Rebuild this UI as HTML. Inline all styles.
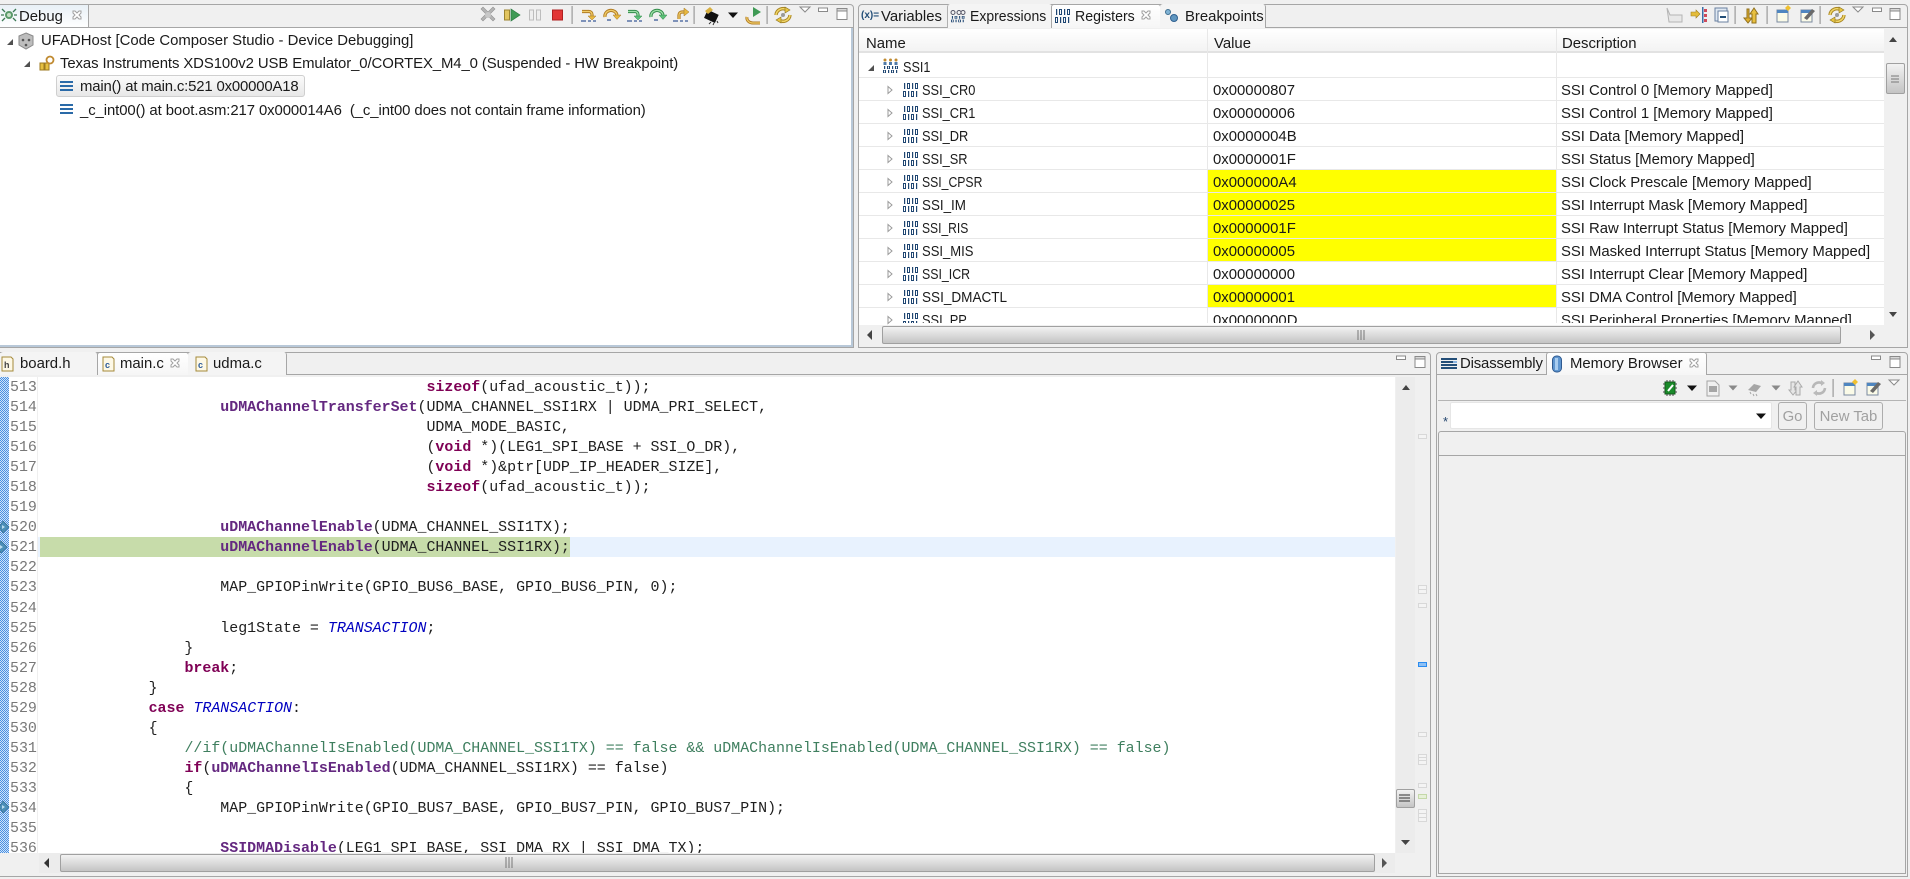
<!DOCTYPE html>
<html><head><meta charset="utf-8"><title>Code Composer Studio</title>
<style>
html,body{margin:0;padding:0;width:1910px;height:879px;overflow:hidden;background:#f0f0f0}
body{position:relative;font-family:"Liberation Sans",sans-serif;font-size:14.9px;color:#1a1a1a}
div{position:absolute;box-sizing:border-box}
.t{white-space:pre;line-height:18px;height:18px}
.n{transform-origin:0 0}
.d{letter-spacing:-.03px}
.b{border:1px solid #a6a6a6}
.tab{height:24px;border:1px solid #a6a6a6;border-bottom:none;border-radius:3px 3px 0 0;background:#f4f4f4}
.act{background:linear-gradient(#fff,#f6f6f6)}
.thumb{background:linear-gradient(#f2f2f2,#c4c4c4);border:1px solid #a0a0a0;border-radius:2px}
pre{position:absolute;margin:0;font-family:"Liberation Mono",monospace;font-size:14.95px;line-height:20.05px;color:#1e1e1e}
pre b{font-weight:bold}
.f{color:#642880;font-weight:bold}.k{color:#7f0055;font-weight:bold}.c{color:#3f7f5f}.e{color:#0000c0;font-style:italic}
svg{position:absolute;left:0;top:0}
</style></head><body>

<!-- Debug panel -->
<div class="b" style="left:0;top:4px;width:854px;height:344px;border-radius:0 4px 0 0;border-left:none;background:#f0f0f0"></div>
<div style="left:0;top:4px;width:89px;height:24px;background:linear-gradient(#e8f0f6,#fff);border-right:1px solid #a6a6a6;border-top:1px solid #a6a6a6"></div>
<div style="left:0;top:27px;width:853px;height:1px;background:#a6a6a6"></div>
<div style="left:89px;top:27px;width:764px;height:1px;background:#a6a6a6"></div>
<div style="left:0;top:28px;width:851px;height:317px;background:#fff"></div>
<div style="left:851px;top:28px;width:2px;height:319px;background:#b8c8d8"></div>
<div style="left:0;top:345px;width:853px;height:2px;background:#b8c8d8"></div>
<div class="t" style="left:19px;top:8px">Debug</div>
<div class="t" style="left:41px;top:32px">UFADHost [Code Composer Studio - Device Debugging]</div>
<div class="t" style="left:60px;top:55px;letter-spacing:-.09px">Texas Instruments XDS100v2 USB Emulator_0/CORTEX_M4_0 (Suspended - HW Breakpoint)</div>
<div style="left:56px;top:75px;width:249px;height:22px;background:linear-gradient(#fbfbfb,#e8e8e8);border:1px solid #cfcfcf;border-radius:3px"></div>
<div class="t" style="left:80px;top:78px;letter-spacing:-.16px">main() at main.c:521 0x00000A18</div>
<div class="t" style="left:80px;top:102px;letter-spacing:-.085px">_c_int00() at boot.asm:217 0x000014A6  (_c_int00 does not contain frame information)</div>

<!-- Registers panel -->
<div class="b" style="left:858px;top:4px;width:1050px;height:344px;border-radius:4px 4px 0 0;background:#f0f0f0"></div>
<div style="left:859px;top:27px;width:1048px;height:1px;background:#a6a6a6"></div>
<div class="tab" style="left:947px;top:4px;width:105px;border-left:1px solid #b0b0b0;border-top:none;border-right:none"></div>
<div class="tab act" style="left:1051px;top:4px;width:110px;height:24px"></div>
<div class="tab" style="left:1160px;top:4px;width:106px;border-left:none;border-top:none"></div>
<div class="t" style="left:881px;top:8px">Variables</div>
<div class="t n" style="left:970px;top:8px;transform:scaleX(.94)">Expressions</div>
<div class="t n" style="left:1075px;top:8px;transform:scaleX(.95)">Registers</div>
<div class="t" style="left:1185px;top:8px">Breakpoints</div>

<div style="left:859px;top:29px;width:1025px;height:296px;background:#fff"></div>
<div style="left:859px;top:29px;width:1025px;height:24px;background:linear-gradient(#fff,#f3f3f3);border-bottom:2px solid #e2e2e2"></div>
<div class="t" style="left:866px;top:35px">Name</div>
<div class="t" style="left:1214px;top:35px">Value</div>
<div class="t" style="left:1562px;top:35px">Description</div>

<div style="left:0;top:0;width:1910px;height:323px;overflow:hidden">
<div style="left:1208px;top:170px;width:348px;height:22px;background:#ff0"></div>
<div style="left:1208px;top:193px;width:348px;height:22px;background:#ff0"></div>
<div style="left:1208px;top:216px;width:348px;height:22px;background:#ff0"></div>
<div style="left:1208px;top:239px;width:348px;height:22px;background:#ff0"></div>
<div style="left:1208px;top:285px;width:348px;height:22px;background:#ff0"></div>
<div style="left:859px;top:77px;width:1025px;height:1px;background:#e8e8e8"></div>
<div style="left:859px;top:100px;width:1025px;height:1px;background:#e8e8e8"></div>
<div style="left:859px;top:123px;width:1025px;height:1px;background:#e8e8e8"></div>
<div style="left:859px;top:146px;width:1025px;height:1px;background:#e8e8e8"></div>
<div style="left:859px;top:169px;width:1025px;height:1px;background:#e8e8e8"></div>
<div style="left:859px;top:192px;width:1025px;height:1px;background:#e8e8e8"></div>
<div style="left:859px;top:215px;width:1025px;height:1px;background:#e8e8e8"></div>
<div style="left:859px;top:238px;width:1025px;height:1px;background:#e8e8e8"></div>
<div style="left:859px;top:261px;width:1025px;height:1px;background:#e8e8e8"></div>
<div style="left:859px;top:284px;width:1025px;height:1px;background:#e8e8e8"></div>
<div style="left:859px;top:307px;width:1025px;height:1px;background:#e8e8e8"></div>
<div style="left:1207px;top:29px;width:1px;height:296px;background:#e8e8e8"></div>
<div style="left:1556px;top:29px;width:1px;height:296px;background:#e8e8e8"></div>

<div class="t n" style="left:903px;top:59px;transform:scaleX(.85)">SSI1</div>
<div class="t n" style="left:922px;top:82px;transform:scaleX(.86)">SSI_CR0</div><div class="t" style="left:1213px;top:82px">0x00000807</div><div class="t d" style="left:1561px;top:82px">SSI Control 0 [Memory Mapped]</div>
<div class="t n" style="left:922px;top:105px;transform:scaleX(.86)">SSI_CR1</div><div class="t" style="left:1213px;top:105px">0x00000006</div><div class="t d" style="left:1561px;top:105px">SSI Control 1 [Memory Mapped]</div>
<div class="t n" style="left:922px;top:128px;transform:scaleX(.86)">SSI_DR</div><div class="t" style="left:1213px;top:128px">0x0000004B</div><div class="t d" style="left:1561px;top:128px">SSI Data [Memory Mapped]</div>
<div class="t n" style="left:922px;top:151px;transform:scaleX(.86)">SSI_SR</div><div class="t" style="left:1213px;top:151px">0x0000001F</div><div class="t d" style="left:1561px;top:151px">SSI Status [Memory Mapped]</div>
<div class="t n" style="left:922px;top:174px;transform:scaleX(.82)">SSI_CPSR</div><div class="t" style="left:1213px;top:174px">0x000000A4</div><div class="t d" style="left:1561px;top:174px">SSI Clock Prescale [Memory Mapped]</div>
<div class="t n" style="left:922px;top:197px;transform:scaleX(.9)">SSI_IM</div><div class="t" style="left:1213px;top:197px">0x00000025</div><div class="t d" style="left:1561px;top:197px">SSI Interrupt Mask [Memory Mapped]</div>
<div class="t n" style="left:922px;top:220px;transform:scaleX(.81)">SSI_RIS</div><div class="t" style="left:1213px;top:220px">0x0000001F</div><div class="t d" style="left:1561px;top:220px">SSI Raw Interrupt Status [Memory Mapped]</div>
<div class="t n" style="left:922px;top:243px;transform:scaleX(.875)">SSI_MIS</div><div class="t" style="left:1213px;top:243px">0x00000005</div><div class="t d" style="left:1561px;top:243px">SSI Masked Interrupt Status [Memory Mapped]</div>
<div class="t n" style="left:922px;top:266px;transform:scaleX(.83)">SSI_ICR</div><div class="t" style="left:1213px;top:266px">0x00000000</div><div class="t d" style="left:1561px;top:266px">SSI Interrupt Clear [Memory Mapped]</div>
<div class="t n" style="left:922px;top:289px;transform:scaleX(.91)">SSI_DMACTL</div><div class="t" style="left:1213px;top:289px">0x00000001</div><div class="t d" style="left:1561px;top:289px">SSI DMA Control [Memory Mapped]</div>
<div class="t n" style="left:922px;top:312px;transform:scaleX(.86)">SSI_PP</div><div class="t" style="left:1213px;top:312px">0x0000000D</div><div class="t d" style="left:1561px;top:312px">SSI Peripheral Properties [Memory Mapped]</div>
</div>

<div style="left:882px;top:326px;width:959px;height:18px" class="thumb"></div>
<div style="left:1886px;top:63px;width:19px;height:31px" class="thumb"></div>

<!-- Editor panel -->
<div class="b" style="left:0;top:352px;width:1431px;height:525px;border-left:none;border-radius:0 4px 0 0;background:#f0f0f0"></div>
<div style="left:0;top:374px;width:1430px;height:1px;background:#a6a6a6"></div>
<div class="tab" style="left:0;top:352px;width:98px;height:23px;border-left:none;border-top:none"></div>
<div class="tab act" style="left:97px;top:352px;width:92px;height:23px"></div>
<div class="tab" style="left:188px;top:352px;width:99px;height:23px;border-left:none;border-top:none"></div>
<div class="t" style="left:20px;top:355px">board.h</div>
<div class="t" style="left:120px;top:355px">main.c</div>
<div class="t" style="left:213px;top:355px">udma.c</div>

<div style="left:0;top:377px;width:1395px;height:476px;background:#fff"></div>
<div style="left:0;top:377px;width:9px;height:476px;background:repeating-conic-gradient(#4a90e2 0 25%,#cfe3f9 0 50%) 0 0/2px 2px"></div>
<div style="left:37px;top:377px;width:1px;height:476px;background:#efefef"></div>
<div style="left:38px;top:537px;width:1357px;height:20px;background:#e8f2fe"></div>
<div style="left:40px;top:537px;width:530px;height:20px;background:#c7dcaa"></div>

<div style="left:0;top:0;width:1395px;height:853px;overflow:hidden">
<pre style="left:10px;top:378px;color:#787878">513
514
515
516
517
518
519
520
521
522
523
524
525
526
527
528
529
530
531
532
533
534
535
536</pre>
<pre style="left:41px;top:378px">                                           <span class="k">sizeof</span>(ufad_acoustic_t));
                    <span class="f">uDMAChannelTransferSet</span>(UDMA_CHANNEL_SSI1RX | UDMA_PRI_SELECT,
                                           UDMA_MODE_BASIC,
                                           (<span class="k">void</span> *)(LEG1_SPI_BASE + SSI_O_DR),
                                           (<span class="k">void</span> *)&amp;ptr[UDP_IP_HEADER_SIZE],
                                           <span class="k">sizeof</span>(ufad_acoustic_t));

                    <span class="f">uDMAChannelEnable</span>(UDMA_CHANNEL_SSI1TX);
                    <span class="f">uDMAChannelEnable</span>(UDMA_CHANNEL_SSI1RX);

                    MAP_GPIOPinWrite(GPIO_BUS6_BASE, GPIO_BUS6_PIN, 0);

                    leg1State = <span class="e">TRANSACTION</span>;
                }
                <span class="k">break</span>;
            }
            <span class="k">case</span> <span class="e">TRANSACTION</span>:
            {
                <span class="c">//if(uDMAChannelIsEnabled(UDMA_CHANNEL_SSI1TX) == false &amp;&amp; uDMAChannelIsEnabled(UDMA_CHANNEL_SSI1RX) == false)</span>
                <span class="k">if</span>(<span class="f">uDMAChannelIsEnabled</span>(UDMA_CHANNEL_SSI1RX) == false)
                {
                    MAP_GPIOPinWrite(GPIO_BUS7_BASE, GPIO_BUS7_PIN, GPIO_BUS7_PIN);

                    <span class="f">SSIDMADisable</span>(LEG1_SPI_BASE, SSI_DMA_RX | SSI_DMA_TX);</pre>
</div>

<div style="left:39px;top:853px;width:1356px;height:20px;background:#ececec"></div>
<div style="left:60px;top:854px;width:1315px;height:18px" class="thumb"></div>
<div style="left:1396px;top:377px;width:19px;height:476px;background:#ececec"></div>
<div style="left:1396px;top:789px;width:19px;height:19px" class="thumb"></div>

<!-- Memory Browser panel -->
<div class="b" style="left:1436px;top:352px;width:472px;height:525px;border-radius:4px 4px 0 0;background:#f0f0f0"></div>
<div style="left:1437px;top:374px;width:109px;height:1px;background:#a6a6a6"></div>
<div style="left:1706px;top:374px;width:201px;height:1px;background:#a6a6a6"></div>
<div class="tab act" style="left:1546px;top:352px;width:161px;height:23px"></div>
<div class="t" style="left:1460px;top:355px;letter-spacing:-.15px">Disassembly</div>
<div class="t" style="left:1570px;top:355px">Memory Browser</div>
<div style="left:1438px;top:400px;width:468px;height:1px;background:#b4b4b4"></div>
<div class="t" style="left:1443px;top:413px;color:#24466e;font-size:13px">*</div>
<div style="left:1450px;top:402px;width:322px;height:27px;background:#fff;border-radius:2px;border:1px solid #e6e6e6"></div>
<div style="left:1778px;top:402px;width:29px;height:28px;border:1px solid #adadad;border-radius:3px;background:#f0f0f0;text-align:center;line-height:28px;color:#a0a0a0">Go</div>
<div style="left:1814px;top:402px;width:69px;height:28px;border:1px solid #adadad;border-radius:3px;background:#f0f0f0;text-align:center;line-height:28px;color:#a0a0a0">New Tab</div>
<div style="left:1438px;top:431px;width:468px;height:443px;border:1px solid #a6a6a6;border-radius:3px 3px 0 0;background:#f0f0f0"></div>
<div style="left:1439px;top:455px;width:466px;height:1px;background:#a6a6a6"></div>

<!-- Icons -->
<svg width="1910" height="879" viewBox="0 0 1910 879">
<defs>
<clipPath id="ppclip"><rect x="900" y="310" width="24" height="13"/></clipPath>
<g id="reg" fill="#1f4672" fill-rule="evenodd">
<path d="M1 0h1.200v6h-1.200zM4 0h3v6h-3zM5 1v4h1v-4zM9 0h1.200v6h-1.200zM12 0h3v6h-3zM13 1v4h1v-4z"/>
<path d="M0 8h3v6h-3zM1 9v4h1v-4zM5 8h1.200v6h-1.200zM8 8h3v6h-3zM9 9v4h1v-4zM13 8h1.200v6h-1.200z"/>
</g>
<g id="open"><path d="M0 3.5l4 3.5-4 3.5z" transform="translate(-2 -7)" fill="#fff" stroke="#9a9a9a"/></g>
<g id="close"><path d="M-4-4l2 0 2 2 2-2 2 0 0 2-2 2 2 2 0 2-2 0-2-2-2 2-2 0 0-2 2-2-2-2z" fill="#fff" stroke="#a0a0a0"/></g>
<g id="min"><rect x="-4.5" y="-2" width="9" height="3.5" fill="#fff" stroke="#8a8a8a"/></g>
<g id="max"><rect x="-5" y="-4.5" width="10" height="11" fill="#fff" stroke="#8a8a8a"/><rect x="-5" y="-4.5" width="10" height="2.5" fill="#d8d8d8" stroke="#8a8a8a"/></g>
<g id="vtri"><path d="M-5-3h10l-5 5z" fill="#fff" stroke="#8a8a8a"/></g>
<g id="dtri"><path d="M-5-2.5h10l-5 5.5z" fill="#111"/></g>
<g id="gtri"><path d="M-4.5-2.5h9l-4.5 5z" fill="#8a8a8a"/></g>
<g id="sync"><path d="M-7 0a7 7 0 0 1 11-5" fill="none" stroke="#a88420" stroke-width="3.400"/><path d="M7 0a7 7 0 0 1-11 5" fill="none" stroke="#a88420" stroke-width="3.400"/><path d="M-7 0a7 7 0 0 1 11-5" fill="none" stroke="#f0d668" stroke-width="1.500"/><path d="M7 0a7 7 0 0 1-11 5" fill="none" stroke="#f0d668" stroke-width="1.500"/><path d="M2-8l5 3-5 3zM-2 8l-5-3 5-3z" fill="#e8c440" stroke="#8c7420" stroke-width=".6"/><circle r="2" fill="#9a9a9a"/></g>
<g id="stack" fill="#2a6aa8"><rect width="13" height="2"/><rect y="4" width="13" height="2"/><rect y="8" width="13" height="2"/></g>
<g id="sep"><rect x="-.5" y="-9" width="1.2" height="18" fill="#9a9a9a"/></g>
<g id="dash"><path d="M0 0h5M7 0h3M12 0h3" stroke="#3a5a98" stroke-width="1.300"/></g>
<g id="diamond"><path d="M0-6l6 6-6 6-4-6z" fill="#4c8fb8" stroke="#2f6a90" stroke-width=".7"/><path d="M-1-2l3 2-3 2z" fill="#b9dcf0"/></g>
<g id="newview"><rect x="-6" y="-5" width="11" height="12" fill="#fbfbe8" stroke="#7a8aa0"/><rect x="-6" y="-5" width="11" height="3" fill="#4f86c0"/></g>
</defs>

<!-- Debug tab icon -->
<g transform="translate(9,15)"><circle r="4" fill="#5a9a6a"/><path d="M-7-6l3 3M7-6l-3 3M-8 0h3M8 0h-3M-7 6l3-3M7 6l-3-3" stroke="#3d7a55" stroke-width="1.3"/><circle r="2" fill="#c8e0c8"/></g>
<use href="#close" x="77" y="15"/>

<!-- Debug toolbar -->
<g transform="translate(488,15)"><path d="M-7-6l2-2 5 5 5-5 2 2-5 5 5 5-2 2-5-5-5 5-2-2 5-5z" fill="#b4b4b4" stroke="#939393" stroke-width=".6"/><circle r="3" fill="#c8c8c8"/></g>
<rect x="504.500" y="10" width="5" height="10" fill="#e2c560" stroke="#9c8430"/><path d="M511 9l9 6-9 6z" fill="#3f9a55" stroke="#2a7a40" stroke-width=".7"/>
<rect x="529.500" y="10" width="4" height="10" fill="#eee" stroke="#bdbdbd"/><rect x="536.500" y="10" width="4" height="10" fill="#eee" stroke="#bdbdbd"/>
<rect x="552.500" y="10" width="10" height="10" fill="#e23636" stroke="#b02020"/>
<use href="#sep" x="572" y="15"/>

<path d="M582 11.500h7a3 3 0 0 1 3 3v2" fill="none" stroke="#b07a20" stroke-width="3.200"/><path d="M582 11.500h7a3 3 0 0 1 3 3v2" fill="none" stroke="#f0cc68" stroke-width="1.300"/><path d="M588 16h8l-4 4z" fill="#e8b840" stroke="#a07420" stroke-width=".5"/><use href="#dash" x="581" y="21"/>
<path d="M605 17a6 5.500 0 0 1 12-2" fill="none" stroke="#b07a20" stroke-width="3.200"/><path d="M605 17a6 5.500 0 0 1 12-2" fill="none" stroke="#f0cc68" stroke-width="1.300"/><path d="M613 15h8l-4 4.500z" fill="#e8b840" stroke="#a07420" stroke-width=".5"/><path d="M607 20h4" stroke="#3a5a98" stroke-width="1.300"/>
<path d="M628 11.500h7a3 3 0 0 1 3 3v2" fill="none" stroke="#2f8a48" stroke-width="3.200"/><path d="M628 11.500h7a3 3 0 0 1 3 3v2" fill="none" stroke="#9fe0a8" stroke-width="1.300"/><path d="M634 16h8l-4 4z" fill="#5cc078" stroke="#2f8a48" stroke-width=".5"/><use href="#dash" x="627" y="21"/>
<path d="M651 17a6 5.500 0 0 1 12-2" fill="none" stroke="#2f8a48" stroke-width="3.200"/><path d="M651 17a6 5.500 0 0 1 12-2" fill="none" stroke="#9fe0a8" stroke-width="1.300"/><path d="M659 15h8l-4 4.500z" fill="#5cc078" stroke="#2f8a48" stroke-width=".5"/><path d="M654 20h4" stroke="#3a5a98" stroke-width="1.300"/>
<path d="M679 19v-4a3 3 0 0 1 3-3h2" fill="none" stroke="#b07a20" stroke-width="3.200"/><path d="M679 19v-4a3 3 0 0 1 3-3h2" fill="none" stroke="#f0cc68" stroke-width="1.300"/><path d="M684 8l5 4-5 4z" fill="#e8b840" stroke="#a07420" stroke-width=".5"/><use href="#dash" x="673" y="21"/>
<use href="#sep" x="694" y="15"/>
<g transform="translate(712,15)"><rect x="-6" y="-3" width="12" height="9" fill="#111" transform="rotate(25)"/><path d="M-7-4l5-4 3 3-5 4z" fill="#d8b040"/><path d="M-1 7l-2 2M2 8l-1 2M5 6l1 2" stroke="#333"/></g>
<use href="#dtri" x="733" y="15"/>
<g transform="translate(754,15)"><path d="M-1-8l8 5-8 5z" fill="#3f9a55"/><path d="M-7 2a6 5 0 0 0 6 6h7" fill="none" stroke="#b07a20" stroke-width="3"/><path d="M-7 2a6 5 0 0 0 6 6h7" fill="none" stroke="#f0cc68" stroke-width="1.200"/></g>
<use href="#sep" x="767" y="15"/>
<use href="#sync" x="783" y="15"/>
<use href="#vtri" x="805" y="10"/>
<use href="#min" x="823" y="10"/>
<use href="#max" x="842" y="13"/>

<!-- Debug tree -->
<path d="M7 45l6-6v6z" fill="#505050"/>
<path d="M23 67l6-6v6z" fill="#505050" transform="translate(1 0)"/>
<g transform="translate(26,41)"><path d="M0-8l7 3v9l-7 4-7-4v-9z" fill="#bdbdbd" stroke="#8a8a8a"/><circle cx="-3" cy="-1" r="1.300" fill="#555"/><circle cx="3" cy="-1" r="1.300" fill="#555"/><circle cy="4" r="1.300" fill="#555"/></g>
<g transform="translate(47,63)"><rect x="-7" y="0" width="4" height="7" fill="#e6c040" stroke="#9c7a20"/><rect x="-2" y="0" width="4" height="7" fill="#e6c040" stroke="#9c7a20"/><circle cx="3" cy="-3" r="3.500" fill="#fff" stroke="#c08a30" stroke-width="1.800"/></g>
<use href="#stack" x="60" y="81"/>
<use href="#stack" x="60" y="104"/>

<!-- Registers tabs/toolbars -->
<text x="861" y="18" font-family="Liberation Sans,sans-serif" font-size="10" font-weight="bold" fill="#234e78">(x)=</text>
<g transform="translate(950,10)"><g fill="none" stroke="#556" stroke-width="1"><circle cx="3" cy="2.500" r="2"/><circle cx="9" cy="2.500" r="2"/><circle cx="13" cy="2.500" r="2"/></g><use href="#reg" transform="translate(1,6) scale(.9,.45)"/></g>
<use href="#reg" x="1055" y="9"/>
<use href="#close" x="1146" y="15"/>
<circle cx="1168" cy="12" r="2.500" fill="#7fb2d4" stroke="#3f6f90"/><circle cx="1174" cy="18" r="3.500" fill="#5f96c0" stroke="#2f6090"/>

<g transform="translate(1675,15)"><path d="M-8-7l3 7h12v7h-13z" fill="#e8e8e8" stroke="#b4b4b4"/></g>
<g transform="translate(1699,15)"><path d="M-8-3h5v-2l4 4-4 4v-2h-5z" fill="#e4bc3a" stroke="#a08020" stroke-width=".6"/><rect x="3" y="-8" width="1.500" height="16" fill="#3a6ea8"/><rect x="5" y="-6" width="3" height="3" fill="#d04a5a"/><rect x="5" y="-1" width="3" height="3" fill="#d04a5a"/><rect x="5" y="4" width="3" height="3" fill="#d04a5a"/></g>
<g transform="translate(1721,15)"><rect x="-6" y="-7" width="12" height="13" fill="#dfe8f2" stroke="#6a80a0"/><rect x="-3" y="-4" width="10" height="11" fill="#fff" stroke="#6a80a0"/><rect x="-1" y="1" width="6" height="2" fill="#234e78"/></g>
<use href="#sep" x="1735" y="15"/>
<g transform="translate(1752,15)"><path d="M-5-6v9h-3l4 5 4-5h-3v-9z" fill="#e0b030" stroke="#90701c"/><path d="M0 8v-9h-2l4-6 4 6h-2v9z" fill="#e8c040" stroke="#90701c"/></g>
<use href="#sep" x="1767" y="15"/>
<use href="#newview" x="1783" y="15"/><path d="M1788 5l3 3-3 3-3-3z" fill="#f0c030"/>
<use href="#newview" x="1807" y="15"/><path d="M1804 18l8-9 3 2-8 9z" fill="#6a6a6a"/>
<use href="#sep" x="1820" y="15"/>
<use href="#sync" x="1837" y="15"/>
<use href="#vtri" x="1858" y="10"/>
<use href="#min" x="1877" y="10"/>
<use href="#max" x="1895" y="13"/>

<!-- Registers tree -->
<path d="M868 71l6-6v6z" fill="#505050"/>
<g fill="#c08a30"><circle cx="885" cy="60" r="1.500"/><circle cx="890.500" cy="60" r="1.500"/><circle cx="896" cy="60" r="1.500"/></g>
<rect x="883.500" y="62" width="3" height="3" fill="#4f7aa8"/><rect x="889" y="62" width="3" height="3" fill="#4f7aa8"/><rect x="894.500" y="62" width="3" height="3" fill="#4f7aa8"/>
<use href="#reg" transform="translate(883,66) scale(1,.5)"/>

<use href="#open" x="890" y="90"/><use href="#reg" x="903" y="83"/>
<use href="#open" x="890" y="113"/><use href="#reg" x="903" y="106"/>
<use href="#open" x="890" y="136"/><use href="#reg" x="903" y="129"/>
<use href="#open" x="890" y="159"/><use href="#reg" x="903" y="152"/>
<use href="#open" x="890" y="182"/><use href="#reg" x="903" y="175"/>
<use href="#open" x="890" y="205"/><use href="#reg" x="903" y="198"/>
<use href="#open" x="890" y="228"/><use href="#reg" x="903" y="221"/>
<use href="#open" x="890" y="251"/><use href="#reg" x="903" y="244"/>
<use href="#open" x="890" y="274"/><use href="#reg" x="903" y="267"/>
<use href="#open" x="890" y="297"/><use href="#reg" x="903" y="290"/>
<use href="#open" x="890" y="320"/>
<g clip-path="url(#ppclip)"><use href="#reg" x="903" y="313"/></g>

<!-- Registers scrollbars -->
<path d="M1889 42l4-5 4 5z" fill="#444"/>
<path d="M1889 312l4 5 4-5z" fill="#444"/>
<path d="M1891 76h8M1891 79h8M1891 82h8" stroke="#777"/>
<path d="M872 330l-5 5 5 5z" fill="#444"/>
<path d="M1870 330l5 5-5 5z" fill="#555"/>
<path d="M1358 330v10M1361 330v10M1364 330v10" stroke="#777"/>

<!-- Editor tabs -->
<g transform="translate(7,364)"><path d="M-5-7h9l2 2v12h-11z" fill="#fdf8e6" stroke="#a58a3a"/><text x="-3" y="4" font-family="Liberation Sans,sans-serif" font-size="9" font-weight="bold" fill="#444">h</text></g>
<g transform="translate(108,364)"><path d="M-5-7h9l2 2v12h-11z" fill="#fdf8e6" stroke="#a58a3a"/><text x="-3" y="4" font-family="Liberation Sans,sans-serif" font-size="9" font-weight="bold" fill="#2a5a9a">c</text></g>
<use href="#close" x="175" y="363"/>
<g transform="translate(201,364)"><path d="M-5-7h9l2 2v12h-11z" fill="#fdf8e6" stroke="#a58a3a"/><text x="-3" y="4" font-family="Liberation Sans,sans-serif" font-size="9" font-weight="bold" fill="#2a5a9a">c</text></g>
<use href="#min" x="1401" y="358"/>
<use href="#max" x="1420" y="361"/>

<!-- Editor gutter annotations -->
<use href="#diamond" x="3" y="527"/>
<use href="#diamond" x="1" y="547"/>
<use href="#diamond" x="3" y="807"/>

<!-- Editor scrollbars & ruler -->
<path d="M1402 390l4-5 4 5z" fill="#444"/>
<path d="M1401 840l4.500 5 4.500-5z" fill="#444"/>
<path d="M1399 795h11M1399 798h11M1399 801h11" stroke="#555" stroke-width="1.200"/>
<path d="M49 858l-5 5 5 5z" fill="#333"/>
<path d="M1382 858l5 5-5 5z" fill="#555"/>
<path d="M506 857v11M509 857v11M512 857v11" stroke="#777"/>
<g fill="#f4f4f4" stroke="#d8d8d8">
<rect x="1418.500" y="434.500" width="8" height="4"/>
<rect x="1418.500" y="585.500" width="8" height="4"/><rect x="1418.500" y="589.500" width="8" height="4"/>
<rect x="1418.500" y="603.500" width="8" height="4"/>
<rect x="1418.500" y="732.500" width="8" height="4"/>
<rect x="1418.500" y="754.500" width="8" height="3"/><rect x="1418.500" y="757.500" width="8" height="3"/><rect x="1418.500" y="760.500" width="8" height="4"/>
<rect x="1418.500" y="783.500" width="8" height="4"/>
<rect x="1418.500" y="809.500" width="8" height="4"/><rect x="1418.500" y="813.500" width="8" height="4"/><rect x="1418.500" y="817.500" width="8" height="4"/>
</g>
<rect x="1418.500" y="794.500" width="8" height="4" fill="#e6f0d8" stroke="#c4d8a8"/>
<rect x="1418.500" y="662.500" width="8" height="4" fill="#8ec0f4" stroke="#2a8cf0"/>

<!-- Memory panel icons -->
<g transform="translate(1441,358)"><g fill="#234e78"><rect y="0" width="16" height="2"/><rect y="3" width="12" height="2"/><rect y="6" width="16" height="2"/><rect y="9" width="16" height="2"/></g><rect x="12" y="3" width="4" height="2" fill="#8ab4e0"/></g>
<g transform="translate(1557,364)"><rect x="-4.500" y="-8" width="9" height="16" rx="4" fill="#5f96d0" stroke="#2f5a90"/><rect x="-2" y="-6" width="3" height="12" fill="#a9cdf0"/></g>
<use href="#close" x="1694" y="363"/>
<use href="#min" x="1876" y="358"/>
<use href="#max" x="1895" y="361"/>
<g transform="translate(1670,388)"><rect x="-5" y="-6" width="10" height="12" fill="#1a8a2a" stroke="#0d5a18"/><path d="M-2 3l5-6" stroke="#fff" stroke-width="2"/><path d="M-7-4h2M-7 0h2M-7 4h2M5-4h2M5 0h2M5 4h2M-3-8v2M0-8v2M3-8v2M-3 6v2M0 6v2M3 6v2" stroke="#444"/></g>
<use href="#dtri" x="1692" y="388"/>
<g transform="translate(1713,388)"><path d="M-6-7h8l4 4v11h-12z" fill="#f0f0f0" stroke="#a4a4a4"/><rect x="-4" y="-2" width="8" height="6" fill="#a6a6a6"/></g>
<use href="#gtri" x="1733" y="388"/>
<g transform="translate(1755,388)"><path d="M-7 2l6-6 7 2-5 6z" fill="#a6a6a6"/><path d="M-5 4l1 2M-2 6l1 2M1 6l1 2" stroke="#a6a6a6"/></g>
<use href="#gtri" x="1776" y="388"/>
<g transform="translate(1796,388)"><path d="M-5-6v8h-2l4 5 4-5h-2v-8z" fill="#e6e6e6" stroke="#aaa"/><path d="M0 7v-8h-2l4-6 4 6h-2v8z" fill="#e6e6e6" stroke="#aaa"/></g>
<g transform="translate(1819,388)"><path d="M-6 0a6 6 0 0 1 10-4" fill="none" stroke="#b8b8b8" stroke-width="2.600"/><path d="M6 0a6 6 0 0 1-10 4" fill="none" stroke="#b8b8b8" stroke-width="2.600"/><path d="M2-8l4 3-4 3zM-2 8l-4-3 4-3z" fill="#bbb"/></g>
<use href="#sep" x="1833" y="388"/>
<use href="#newview" x="1850" y="388"/><path d="M1855 379l3 3-3 3-3-3z" fill="#f0c030"/>
<use href="#newview" x="1873" y="388"/><path d="M1870 391l8-9 3 2-8 9z" fill="#6a6a6a"/>
<use href="#vtri" x="1894" y="383"/>
<use href="#dtri" x="1761" y="416"/>
</svg>
</body></html>
